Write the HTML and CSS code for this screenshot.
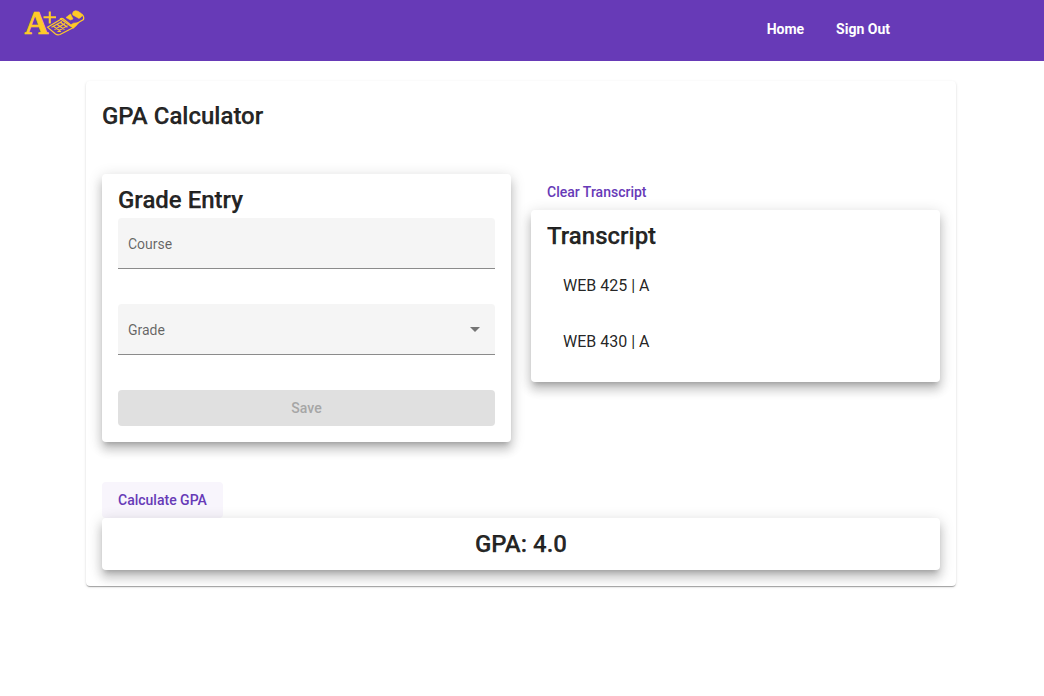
FILE: index.html
```html
<!DOCTYPE html>
<html lang="en">
<head>
<meta charset="utf-8">
<title>GPA Calculator</title>
<link rel="stylesheet" href="styles.css">
</head>
<body>
<header class="toolbar">
  <svg class="logo" width="68" height="48" viewBox="20 0 68 48" role="img" aria-label="A+ logo">
    <text class="logo-letter" x="24.5" y="34.400" textLength="24" lengthAdjust="spacingAndGlyphs">A</text>
    <path class="plus" d="M43.500 17.300h12.500M49.800 11.500v12"/>
    <path class="line" d="M47.500 27.200 61 19.300 70.500 26 73.500 27.500 60 34.500Q57.500 35.500 55.500 34Z"/>
    <path class="line" d="M60 19Q62 17.500 64 19.500L69.500 24 71.500 26"/>
    <path class="keys" d="M51.500 27.300 62 21.500M54.500 29.500 65 23.500M57.500 31.500 67.500 25.600M53 26l8 5.500M56.500 24l8 5.500M60 22l7.500 5.300"/>
    <path class="solid" d="M66 17.500 70.500 14 73 19 70.500 20Z"/>
    <path class="solid" d="M73.500 11.500Q75.500 10 78 11.300L81.300 13.500Q83 16 80.500 17.500L79 18.500 72.800 15Q72 13 73.500 11.500Z"/>
    <path class="line" d="M81.500 14Q84.500 16.500 83.500 19.500L77.500 23"/>
    <path class="solid" d="M70.500 25 73.500 23.200 79 22.500 76 26 73 28.300Z"/>
  </svg>
  <nav class="nav">
    <a class="nav-link">Home</a>
    <a class="nav-link">Sign Out</a>
  </nav>
</header>
<main class="card page-card">
  <h1 class="title page-title">GPA Calculator</h1>
  <div class="columns">
    <form class="card raised entry">
      <h2 class="title">Grade Entry</h2>
      <div class="field"><span>Course</span></div>
      <div class="field"><span>Grade</span><i class="arrow"></i></div>
      <button class="save" type="button" disabled>Save</button>
    </form>
    <section>
      <button class="button" type="button">Clear Transcript</button>
      <div class="card raised transcript">
        <h2 class="title">Transcript</h2>
        <ul class="list">
          <li>WEB 425 | A</li>
          <li>WEB 430 | A</li>
        </ul>
      </div>
    </section>
  </div>
  <button class="button focused" type="button">Calculate GPA</button>
  <div class="card raised result"><h2 class="title">GPA: 4.0</h2></div>
</main>
</body>
</html>
```
FILE: styles.css
```css
* { box-sizing: border-box; }
body {
  min-height: 100vh;
  margin: 0;
  background: #fff;
  color: rgba(0, 0, 0, .87);
  font-family: Roboto, sans-serif;
}
.toolbar {
  display: flex;
  align-items: flex-start;
  justify-content: space-between;
  height: 61px;
  padding: 0 138px 0 20px;
  background: #673ab7;
}
.logo { fill: none; stroke: #ffca28; }
.logo-letter {
  fill: #ffca28;
  stroke-width: .7;
  font: bold 34px "Liberation Serif", serif;
}
.plus { stroke-width: 2.1; }
.line { stroke-width: 1.2; }
.keys { stroke-width: 1.1; }
.solid { fill: #ffca28; stroke-width: .6; }
.nav { display: flex; padding-top: 11px; }
.nav-link {
  padding: 0 16px;
  color: #fff;
  font-size: 14px;
  font-weight: 700;
  line-height: 36px;
}
.card { padding: 16px; border-radius: 4px; background: #fff; }
.page-card {
  width: 870px;
  height: 505px;
  margin: 20px 0 0 86px;
  box-shadow: 0 2px 1px -1px rgba(0, 0, 0, .2), 0 1px 1px rgba(0, 0, 0, .14), 0 1px 3px rgba(0, 0, 0, .12);
}
.raised {
  box-shadow: 0 5px 5px -3px rgba(0, 0, 0, .2), 0 8px 10px 1px rgba(0, 0, 0, .14), 0 3px 14px 2px rgba(0, 0, 0, .12);
}
.title {
  margin: 0;
  font-size: 24px;
  font-weight: 500;
  line-height: 32px;
  -webkit-text-stroke: .25px;
}
.page-title { padding-top: 3px; margin-bottom: 42px; }
.columns {
  display: grid;
  grid-template-columns: 1fr 1fr;
  align-items: start;
  gap: 20px;
  margin-bottom: 40px;
}
.entry { height: 268px; padding-top: 10px; }
.field {
  display: flex;
  align-items: center;
  justify-content: space-between;
  height: 51px;
  margin: 2px 0 35px;
  padding: 1px 15px 0 10px;
  border-bottom: 1px solid #8b8b8b;
  border-radius: 4px 4px 0 0;
  background: #f5f5f5;
  color: rgba(0, 0, 0, .6);
  font-size: 14px;
}
.arrow {
  border: 5px solid transparent;
  border-top-color: #757575;
  border-bottom: 0;
}
.save, .button {
  display: block;
  height: 36px;
  padding: 0 16px;
  border: 0;
  border-radius: 4px;
  font: 500 14px/36px Roboto, sans-serif;
}
.save { width: 100%; background: #e0e0e0; color: #a6a6a6; }
.button { background: transparent; color: #673ab7; }
.focused { background: #f8f5fc; }
.transcript { height: 172px; padding-top: 10px; }
.list { margin: 0; padding: 6px 0 0; list-style: none; }
.list li { height: 56px; padding-left: 16px; font-size: 16px; line-height: 56px; }
.result { height: 52px; padding: 10px 16px; text-align: center; }
```
